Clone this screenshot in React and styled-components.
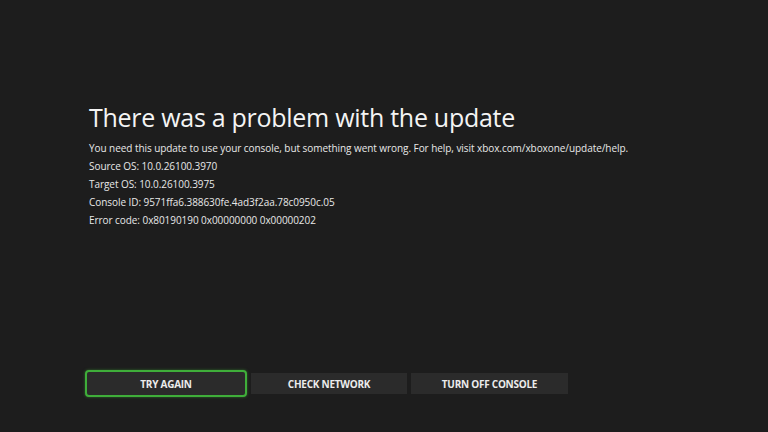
import styled, { createGlobalStyle } from "styled-components";

const GlobalStyle = createGlobalStyle`
  html, body {
    margin: 0;
    padding: 0;
    background: #1d1d1d;
  }
`;

const details = [
  "You need this update to use your console, but something went wrong. For help, visit xbox.com/xboxone/update/help.",
  "Source OS: 10.0.26100.3970",
  "Target OS: 10.0.26100.3975",
  "Console ID: 9571ffa6.388630fe.4ad3f2aa.78c0950c.05",
  "Error code: 0x80190190 0x00000000 0x00000202",
];

const actions = [
  { label: "TRY AGAIN", width: 162, focused: true },
  { label: "CHECK NETWORK", width: 156 },
  { label: "TURN OFF CONSOLE", width: 157 },
];

export default function App() {
  return (
    <>
      <GlobalStyle />
      <Screen>
        <Message>
          <Title>There was a problem with the update</Title>
          <Details>
            {details.map((line) => (
              <Line key={line}>{line}</Line>
            ))}
          </Details>
        </Message>

        <ButtonRow>
          {actions.map((a) => (
            <ActionButton key={a.label} $width={a.width} $focused={a.focused}>
              {a.label}
            </ActionButton>
          ))}
        </ButtonRow>
      </Screen>
    </>
  );
}

const Screen = styled.div`
  width: 768px;
  height: 432px;
  box-sizing: border-box;
  padding: 100px 0 35px 89px;
  display: flex;
  flex-direction: column;
  background: #1d1d1d;
  font-family: "Open Sans", "Noto Sans", sans-serif;
  color: #f0f0f0;
  overflow: hidden;
`;

const Message = styled.div`
  display: flex;
  flex-direction: column;
`;

const Title = styled.h1`
  margin: 0;
  font-size: 25px;
  line-height: 34px;
  font-weight: 400;
  letter-spacing: -0.28px;
  color: #f4f4f4;
`;

const Details = styled.div`
  margin-top: 5px;
  display: flex;
  flex-direction: column;
`;

const Line = styled.p`
  margin: 0;
  font-size: 10px;
  line-height: 18px;
  letter-spacing: -0.06px;
  color: #e8e8e8;
`;

const ButtonRow = styled.div`
  margin-top: auto;
  margin-left: -4px;
  display: flex;
  align-items: center;
  gap: 4px;
  height: 27px;
`;

const ActionButton = styled.button`
  box-sizing: border-box;
  width: ${({ $width }) => $width}px;
  height: ${({ $focused }) => ($focused ? 27 : 21)}px;
  padding: 0;
  border: ${({ $focused }) => ($focused ? "2px solid #3fae3a" : "none")};
  border-radius: ${({ $focused }) => ($focused ? 4 : 0)}px;
  box-shadow: ${({ $focused }) => ($focused ? "0 0 3px rgba(70, 190, 60, 0.5)" : "none")};
  background: #2b2b2b;
  color: #ececec;
  font-family: "Open Sans", "Noto Sans", sans-serif;
  font-size: 10px;
  font-weight: 700;
  letter-spacing: -0.25px;
  cursor: pointer;
`;
